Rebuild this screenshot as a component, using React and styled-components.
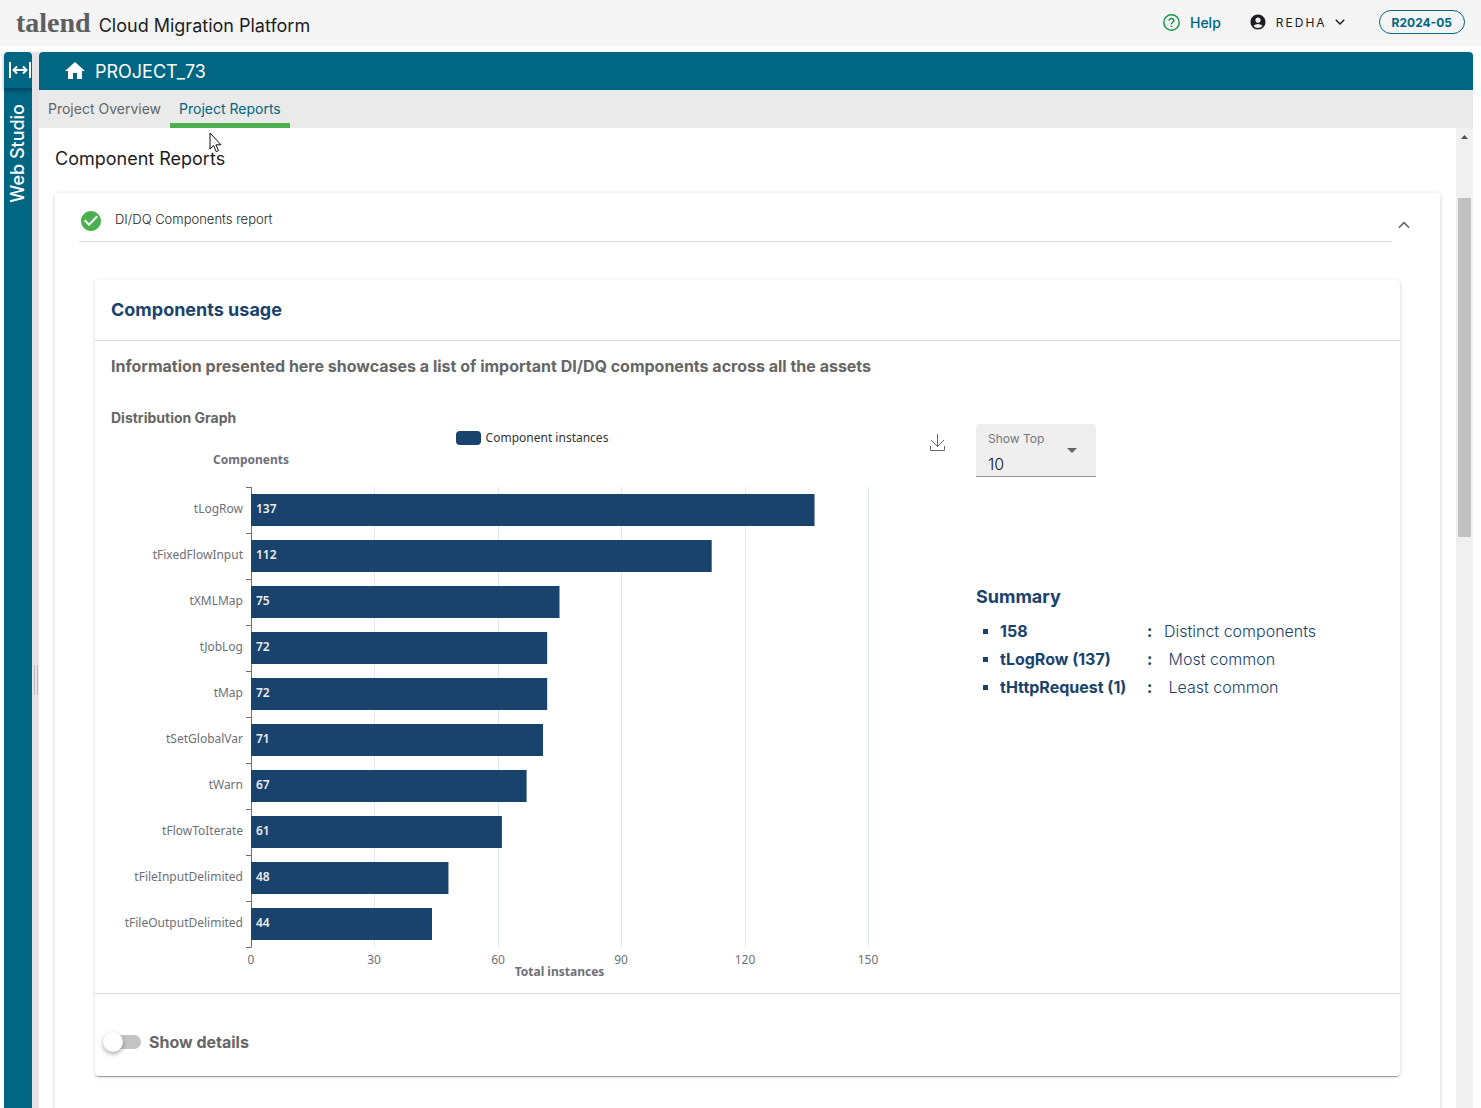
import React, { memo, useState } from 'react';
import styled, { createGlobalStyle } from 'styled-components';
import { MdAccountCircle, MdCheckCircle, MdHome } from 'react-icons/md';

const GlobalStyle = createGlobalStyle`
  * {
    box-sizing: border-box;
  }

  body {
    margin: 0;
    background-color: #fff;
    color: #1d1d1f;
    font-family: Inter, 'Liberation Sans', sans-serif;
    font-size: 14px;
  }

  h1, h2, h3, h4, p, ul {
    margin: 0;
    padding: 0;
  }

  button {
    border: 0;
    padding: 0;
    background: none;
    font-family: inherit;
    color: inherit;
    cursor: pointer;
  }

  a {
    text-decoration: none;
  }

  svg {
    display: block;
  }
`;

const PageWrapper = styled.div`
  display: flex;
  flex-direction: column;
  height: 100vh;
  overflow: hidden;
`;

const HeaderWrapper = styled.header`
  display: flex;
  flex: none;
  align-items: center;
  justify-content: space-between;
  height: 46px;
  padding: 0 16px;
  background-color: #f4f4f4;

  .brand {
    display: flex;
    align-items: baseline;
    gap: 8px;
  }

  .logo {
    font-family: 'Liberation Serif', serif;
    font-size: 28px;
    font-weight: 700;
    line-height: 44px;
    color: #5d5e60;
  }

  .product {
    font-size: 18px;
    font-weight: 400;
  }

  .actions {
    display: flex;
    align-items: center;
    align-self: flex-start;
    height: 44px;
  }
`;

const HelpLink = styled.a`
  display: flex;
  align-items: center;
  gap: 10px;
  margin-right: 28px;
  font-weight: 500;
  color: #006682;
`;

const UserButton = styled.button`
  display: flex;
  align-items: center;
  margin-right: 34px;
  font-size: 12px;

  .name {
    margin: 0 8px 0 9px;
    letter-spacing: 2px;
  }
`;

const VersionButton = styled.button`
  height: 24px;
  padding: 0 12px;
  border: 1px solid #006682;
  border-radius: 12px;
  font-size: 12px;
  font-weight: 700;
  color: #006682;
`;

const WorkspaceWrapper = styled.div`
  display: flex;
  flex: 1;
  min-height: 0;
  padding: 6px 8px 0 4px;
`;

const SideBarWrapper = styled.aside`
  display: flex;
  flex: none;
  flex-direction: column;
  align-items: center;
  width: 28px;
  border-radius: 4px 4px 0 0;
  background-color: #006682;
  color: #fff;

  .expand {
    display: flex;
    align-items: center;
    justify-content: center;
    width: 100%;
    height: 37px;
    padding-left: 4px;
    border-bottom: 1px solid #00417a;
    box-shadow: 0 2px 4px rgba(0, 0, 0, 0.3);
  }

  .title {
    margin-top: 15px;
    writing-mode: vertical-rl;
    transform: rotate(180deg);
    font-size: 18px;
    line-height: 28px;
    font-weight: 500;
  }
`;

const Splitter = styled.div`
  display: flex;
  flex: none;
  align-items: center;
  justify-content: center;
  gap: 2px;
  width: 7px;
  padding-top: 200px;
  background-color: #e5e3e5;

  i {
    width: 1px;
    height: 30px;
    background-color: #bdbdbd;
  }
`;

const MainWrapper = styled.main`
  display: flex;
  flex: 1;
  flex-direction: column;
  min-width: 0;
`;

const ProjectBar = styled.div`
  display: flex;
  flex: none;
  align-items: center;
  gap: 8px;
  height: 38px;
  padding-left: 24px;
  border-radius: 4px 4px 0 0;
  background-color: #006682;
  color: #fff;

  h1 {
    font-size: 18px;
    font-weight: 400;
  }
`;

const TabBar = styled.nav`
  display: flex;
  flex: none;
  height: 38px;
  background-color: #eaeaea;
`;

const Tab = styled.a`
  padding: 0 9px;
  border-bottom: 5px solid ${(props) => (props.$active ? '#4caf50' : 'transparent')};
  line-height: 38px;
  color: ${(props) => (props.$active ? '#006682' : '#616569')};
`;

const ScrollArea = styled.div`
  display: flex;
  flex: 1;
  min-height: 0;

  .content {
    flex: 1;
    min-width: 0;
    padding: 19px 16px 0;
    overflow: hidden;
  }
`;

const ScrollTrack = styled.div`
  flex: none;
  width: 17px;
  padding: 7px 2px 0;
  background-color: #f0f0f0;

  .arrow {
    width: 7px;
    height: 4px;
    margin: 0 auto 59px;
    background-color: #505050;
    clip-path: polygon(50% 0, 100% 100%, 0 100%);
  }

  .thumb {
    height: 339px;
    background-color: #c1c1c1;
  }
`;

const PageTitle = styled.h2`
  margin-bottom: 22px;
  font-size: 18px;
  font-weight: 400;
  line-height: 24px;
`;

const Panel = styled.section`
  height: 1000px;
  padding: 0 40px;
  border-radius: 2px;
  box-shadow: 0 1px 5px rgba(0, 0, 0, 0.18);
`;

const PanelHeader = styled.div`
  display: flex;
  gap: 4px;
  height: 49px;
  margin: 0 -12px 38px -16px;

  .title {
    display: flex;
    flex: 1;
    align-items: center;
    gap: 12px;
    padding-top: 7px;
    border-bottom: 1px solid #dcdcdc;
  }

  h3 {
    padding-bottom: 3px;
    font-size: 13px;
    font-weight: 300;
    line-height: 20px;
    color: #1d1d1f;
  }

  button {
    display: flex;
    align-items: center;
    justify-content: center;
    width: 16px;
    padding-top: 14px;
    color: #666;
  }
`;

const Card = styled.section`
  border-radius: 4px;
  box-shadow: 0 3px 1px -2px rgba(0, 0, 0, 0.2), 0 1px 1px rgba(0, 0, 0, 0.2), 0 1px 5px rgba(0, 0, 0, 0.12);

  > h3 {
    padding: 0 16px;
    border-bottom: 1px solid #dcdcdc;
    font-size: 18px;
    font-weight: 700;
    line-height: 60px;
    color: #19426c;
  }

  .body {
    padding: 13px 16px 0;
    border-bottom: 1px solid #dcdcdc;
  }

  .description {
    margin-bottom: 30px;
    font-size: 16px;
    font-weight: 700;
    line-height: 24px;
    color: #666;
  }

  .columns {
    display: grid;
    grid-template-columns: minmax(0, 842px) 1fr;
    gap: 23px;
  }
`;

const ChartWrapper = styled.div`
  h4 {
    font-size: 14px;
    font-weight: 700;
    line-height: 20px;
    color: #666;
  }

  .toolbar {
    display: grid;
    grid-template-columns: 1fr auto 1fr;
    align-items: start;
    height: 20px;
  }

  .legend {
    display: flex;
    grid-column: 2;
    align-items: center;
    gap: 5px;
    font-family: 'Noto Sans', sans-serif;
    font-size: 12px;
    line-height: 20px;
    color: #333;
  }

  .swatch {
    width: 25px;
    height: 14px;
    border-radius: 4px;
    background-color: #19426c;
  }

  .download {
    justify-self: end;
    margin-right: 8px;
    padding-top: 6px;
  }

  .chart {
    margin-top: 2px;
    font-family: 'Noto Sans', sans-serif;
    font-size: 12px;
  }
`;

const ShowTopField = styled.div`
  position: relative;
  width: 120px;
  height: 53px;
  margin: 16px 0 108px;
  padding: 5px 12px 0;
  border-bottom: 1px solid #949494;
  border-radius: 4px 4px 0 0;
  background-color: #efefef;

  label {
    display: block;
    font-size: 12px;
    line-height: 20px;
    color: #777;
  }

  select {
    width: 100%;
    height: 28px;
    padding: 2px 0 0;
    border: 0;
    appearance: none;
    background: none;
    font-family: inherit;
    font-size: 16px;
    font-weight: 300;
    color: #111;
  }

  svg {
    position: absolute;
    top: 24px;
    right: 19px;
    pointer-events: none;
  }
`;

const SummaryWrapper = styled.div`
  color: #19426c;

  h3 {
    margin-bottom: 8px;
    font-size: 18px;
    font-weight: 700;
    line-height: 24px;
  }

  li {
    display: grid;
    grid-template-columns: 24px 147px 17px 1fr;
    align-items: center;
    font-size: 16px;
    font-weight: 300;
    line-height: 28px;
    white-space: pre;

    &::before {
      content: '';
      width: 5px;
      height: 5px;
      margin-left: 7px;
      background-color: #19426c;
    }
  }

  b {
    font-weight: 700;
  }
`;

const DetailsToggle = styled.div`
  display: flex;
  align-items: center;
  height: 82px;
  gap: 8px;
  padding: 14px 10px 0;

  input {
    width: 36px;
    height: 14px;
    margin: 0;
    border-radius: 7px;
    appearance: none;
    background-color: #c4c4c4;
    cursor: pointer;

    &::before {
      content: '';
      display: block;
      width: 20px;
      height: 20px;
      margin: -3px 0 0 -2px;
      border-radius: 50%;
      background-color: #fff;
      box-shadow: 0 2px 4px rgba(0, 0, 0, 0.35);
    }

    &:checked::before {
      margin-left: 18px;
    }
  }

  label {
    font-size: 16px;
    font-weight: 700;
    color: #666;
  }
`;

const Pointer = styled.svg`
  position: absolute;
  left: 209px;
  top: 132px;
  pointer-events: none;
`;

const components = [
  { name: 'tLogRow', count: 137 },
  { name: 'tFixedFlowInput', count: 112 },
  { name: 'tXMLMap', count: 75 },
  { name: 'tJobLog', count: 72 },
  { name: 'tMap', count: 72 },
  { name: 'tSetGlobalVar', count: 71 },
  { name: 'tWarn', count: 67 },
  { name: 'tFlowToIterate', count: 61 },
  { name: 'tFileInputDelimited', count: 48 },
  { name: 'tFileOutputDelimited', count: 44 }
];

const summary = [
  { value: '158', label: 'Distinct components' },
  { value: 'tLogRow (137)', label: ' Most common' },
  { value: 'tHttpRequest (1)', label: ' Least common' }
];

const ticks = [0, 30, 60, 90, 120, 150];

const AXIS_X = 140;
const AXIS_Y = 37;
const ROW = 46;
const PLOT_WIDTH = 617;
const PLOT_HEIGHT = 460;

const toX = (value) => AXIS_X + Math.round((value / 150) * PLOT_WIDTH);

const Chevron = ({ up, size = 10 }) => (
  <svg width={size} height={size} viewBox="0 0 10 10" fill="none" stroke="currentColor" strokeWidth="1.4">
    <path d={up ? 'M0.7 7.3 5 3l4.3 4.3' : 'M0.7 2.7 5 7l4.3-4.3'} />
  </svg>
);

const BarChart = memo((props) => {
  const { data } = props;

  return (
    <svg className="chart" width="100%" height="543" role="img" aria-label="Total instances by component">
      <text x={AXIS_X} y="14" textAnchor="middle" fontWeight="700" fill="#6e7079">
        Components
      </text>
      {ticks.map((tick) => (
        <g key={tick}>
          {tick > 0 && (
            <path d={`M${toX(tick) + 0.5} ${AXIS_Y}v${PLOT_HEIGHT}`} stroke="#e0e6f1" />
          )}
          <text x={toX(tick)} y="514" textAnchor="middle" fill="#6e7079">
            {tick}
          </text>
        </g>
      ))}
      <path
        d={`M${AXIS_X + 0.5} ${AXIS_Y}v${PLOT_HEIGHT + 0.5}h-5.5`}
        fill="none"
        stroke="#6e7079"
      />
      {data.map((item, index) => (
        <g key={item.name}>
          <rect
            x={AXIS_X}
            y={AXIS_Y + 7 + index * ROW}
            width={(item.count / 150) * PLOT_WIDTH}
            height="32"
            fill="#19426c"
          />
          <text x={AXIS_X - 8} y={AXIS_Y + 26 + index * ROW} textAnchor="end" fill="#6e7079">
            {item.name}
          </text>
          <text x={AXIS_X + 5} y={AXIS_Y + 26 + index * ROW} fontWeight="600" fill="#eee">
            {item.count}
          </text>
          <path d={`M${AXIS_X - 5} ${AXIS_Y + 0.5 + index * ROW}h5`} stroke="#6e7079" />
        </g>
      ))}
      <text x={AXIS_X + PLOT_WIDTH / 2} y="526" textAnchor="middle" fontWeight="700" fill="#6e7079">
        Total instances
      </text>
    </svg>
  );
});

const Header = memo(() => {
  return (
    <HeaderWrapper>
      <div className="brand">
        <span className="logo">talend</span>
        <span className="product">Cloud Migration Platform</span>
      </div>
      <div className="actions">
        <HelpLink href="#help">
          <svg width="17" height="17" viewBox="0 0 17 17" fill="none" stroke="#169b50" strokeWidth="1.5">
            <circle cx="8.5" cy="8.5" r="7.7" />
            <path d="M6.2 6.8C6.2 5.3 7.2 4.5 8.5 4.5s2.3.9 2.3 2.1c0 1.6-2.3 1.8-2.3 3.7M8.5 11.6v1.5" />
          </svg>
          Help
        </HelpLink>
        <UserButton>
          <MdAccountCircle size={18} />
          <span className="name">REDHA</span>
          <Chevron />
        </UserButton>
        <VersionButton>R2024-05</VersionButton>
      </div>
    </HeaderWrapper>
  );
});

const App = memo(() => {
  const [top, setTop] = useState('10');

  return (
    <PageWrapper>
      <GlobalStyle />
      <Header />
      <WorkspaceWrapper>
        <SideBarWrapper>
          <button className="expand" aria-label="Expand">
            <svg width="22" height="16" viewBox="0 0 22 16" fill="none" stroke="#fff" strokeWidth="2">
              <path d="M1 0v16M21 0v16M4.5 8h13M8 4.5 4.5 8 8 11.5M14 4.5 17.5 8 14 11.5" />
            </svg>
          </button>
          <span className="title">Web Studio</span>
        </SideBarWrapper>
        <Splitter>
          <i />
          <i />
        </Splitter>
        <MainWrapper>
          <ProjectBar>
            <MdHome size={24} />
            <h1>PROJECT_73</h1>
          </ProjectBar>
          <TabBar>
            <Tab href="#overview">Project Overview</Tab>
            <Tab href="#reports" $active>
              Project Reports
            </Tab>
          </TabBar>
          <ScrollArea>
            <div className="content">
              <PageTitle>Component Reports</PageTitle>
              <Panel>
                <PanelHeader>
                  <div className="title">
                    <MdCheckCircle size={24} color="#4caf50" />
                    <h3>DI/DQ Components report</h3>
                  </div>
                  <button aria-label="Collapse">
                    <Chevron up size={12} />
                  </button>
                </PanelHeader>
                <Card>
                  <h3>Components usage</h3>
                  <div className="body">
                    <p className="description">
                      Information presented here showcases a list of important DI/DQ components across all the assets
                    </p>
                    <div className="columns">
                      <ChartWrapper>
                        <h4>Distribution Graph</h4>
                        <div className="toolbar">
                          <div className="legend">
                            <i className="swatch" />
                            Component instances
                          </div>
                          <button className="download" aria-label="Download">
                            <svg width="15" height="17" viewBox="0 0 15 17" fill="none" stroke="#666">
                              <path d="M7.5 0v12.5M1 6l6.5 6.5L14 6M0.5 12v4.5h14V12" />
                            </svg>
                          </button>
                        </div>
                        <BarChart data={components} />
                      </ChartWrapper>
                      <div>
                        <ShowTopField>
                          <label htmlFor="show-top">Show Top</label>
                          <select id="show-top" value={top} onChange={(e) => setTop(e.target.value)}>
                            <option>10</option>
                            <option>20</option>
                          </select>
                          <svg width="10" height="5" viewBox="0 0 10 5" fill="#666">
                            <path d="M0 0h10L5 5z" />
                          </svg>
                        </ShowTopField>
                        <SummaryWrapper>
                          <h3>Summary</h3>
                          <ul>
                            {summary.map((item) => (
                              <li key={item.value}>
                                <b>{item.value}</b>
                                <b>:</b>
                                <span>{item.label}</span>
                              </li>
                            ))}
                          </ul>
                        </SummaryWrapper>
                      </div>
                    </div>
                  </div>
                  <DetailsToggle>
                    <input type="checkbox" id="show-details" />
                    <label htmlFor="show-details">Show details</label>
                  </DetailsToggle>
                </Card>
              </Panel>
            </div>
            <ScrollTrack>
              <div className="arrow" />
              <div className="thumb" />
            </ScrollTrack>
          </ScrollArea>
        </MainWrapper>
      </WorkspaceWrapper>
      <Pointer width="13" height="21" viewBox="0 0 13 21">
        <path d="M1 1v16l3.6-3.4 2.6 6 2.3-1-2.6-5.8H12z" fill="#fff" stroke="#111" />
      </Pointer>
    </PageWrapper>
  );
});

export default App;
